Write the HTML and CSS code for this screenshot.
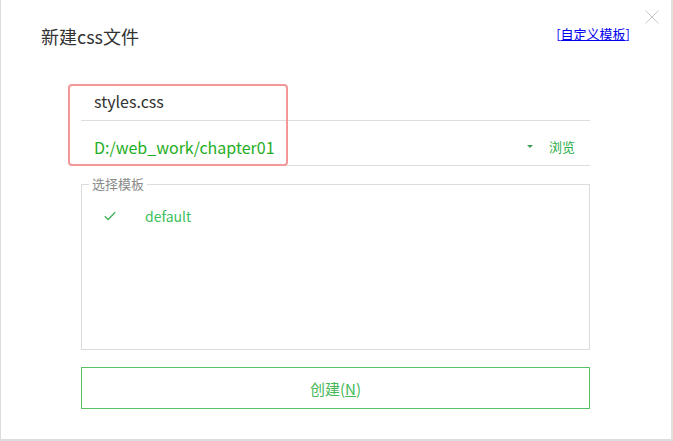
FILE: index.html
```html
<html>
    <head>
        <title>新建css文件</title>
        <link rel="stylesheet" href="styles.css">
    </head>
    <body>
        <div class="dialog">
            <a class="close" href="#" title="关闭">
                <svg width="14" height="14" viewBox="0 0 14 14"><path d="M0.5 0.5L13.5 13.5M13.5 0.5L0.5 13.5" stroke="#c8c8c8" stroke-width="1" fill="none"/></svg>
            </a>
            <div class="header">
                <h1 class="title">新建css文件</h1>
                <span class="custom">[<a href="#">自定义模板</a>]</span>
            </div>
            <div class="form">
                <div class="field">
                    <span class="name">styles.css</span>
                </div>
                <div class="field path">
                    <span class="dir">D:/web_work/chapter01</span>
                    <span class="caret"></span>
                    <a class="browse" href="#">浏览</a>
                </div>
                <!-- red mark drawn over the two inputs -->
                <div class="highlight"></div>
                <fieldset class="templates">
                    <legend>选择模板</legend>
                    <div class="tpl">
                        <svg class="check" width="12" height="10" viewBox="0 0 12 10"><path d="M0.8 5.2L4.2 8.6L11.2 1.2" stroke="#47b25c" stroke-width="1.4" fill="none"/></svg>
                        <span class="tpl-name">default</span>
                    </div>
                </fieldset>
                <button class="create">创建(<u>N</u>)</button>
            </div>
        </div>
    </body>
</html>
```

FILE: styles.css
```css
body {
    margin: 0;
    background-color: #fff;
    font-family: "Noto Sans CJK SC", "Noto Sans", sans-serif;
}
.dialog {
    position: relative;
    width: 670px;
    height: 439px;
    border-left: 1px solid #dcdcdc;
    border-right: 2px solid #e2e0da;
    border-bottom: 2px solid #dcdcdc;
    background-color: #fff;
}
.close {
    position: absolute;
    top: 10px;
    right: 12px;
    width: 14px;
    height: 14px;
    line-height: 0;
}
.header {
    display: flex;
    justify-content: space-between;
    align-items: center;
    padding: 24px 41px 0 40px;
}
.title {
    margin: 0;
    font-size: 18px;
    line-height: 24px;
    font-weight: normal;
    color: #333;
}
.custom {
    margin-bottom: 4px;
    font-size: 13px;
    line-height: 16px;
    color: #0000ee;
}
.custom a {
    color: #0000ee;
    text-decoration: underline;
}
.form {
    position: relative;
    margin: 28px 81px 0 80px;
}
.field {
    display: flex;
    align-items: flex-start;
    height: 45px;
    box-sizing: border-box;
    padding: 15px 15px 0 13px;
    border-bottom: 1px solid #dedede;
    font-size: 16px;
    line-height: 20px;
}
.name {
    color: #333;
}
.path {
    padding-top: 16px;
}
.dir {
    flex: 1;
    color: #1fae24;
}
.caret {
    width: 0;
    height: 0;
    margin-top: 8px;
    margin-right: 16px;
    border-left: 3px solid transparent;
    border-right: 3px solid transparent;
    border-top: 3px solid #3d9f56;
}
.browse {
    font-size: 13px;
    color: #2aac45;
    text-decoration: none;
}
.highlight {
    position: absolute;
    left: -13px;
    top: 8px;
    width: 216px;
    height: 78px;
    border: 2px solid #f39797;
    border-radius: 4px;
}
.templates {
    margin: 10px 0 0 0;
    padding: 0 0 0 7px;
    height: 174px;
    box-sizing: border-box;
    border: 1px solid #dcdcdc;
}
.templates legend {
    padding: 0 3px;
    font-size: 13px;
    line-height: 16px;
    color: #8a8a8a;
}
.tpl {
    display: flex;
    align-items: center;
    margin-top: 15px;
    padding-left: 15px;
}
.check {
    margin-right: 29px;
}
.tpl-name {
    font-size: 14px;
    line-height: 18px;
    color: #3ec05c;
}
.create {
    display: block;
    width: 100%;
    height: 42px;
    margin-top: 17px;
    border: 1px solid #57c266;
    background-color: #fff;
    font-family: "Noto Sans CJK SC", "Noto Sans", sans-serif;
    font-size: 15px;
    color: #46b858;
    cursor: pointer;
}
```
